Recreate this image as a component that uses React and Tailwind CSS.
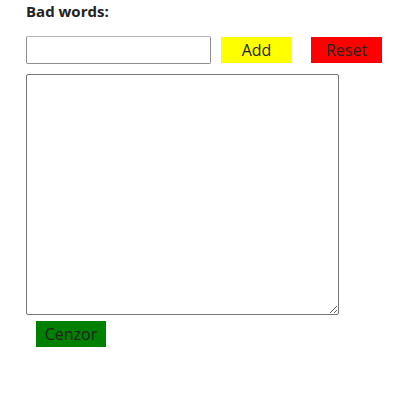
import React, { useState } from "react";

export default function App() {
  const [word, setWord] = useState("");
  const [text, setText] = useState("");

  return (
    <div className="pl-[26px] font-['Open_Sans',sans-serif] text-[#222]">
      <h3 className="text-[15px] font-bold leading-[20px] pt-[1px]">Bad words:</h3>
      <div className="flex items-start mt-[15px]">
        <input
          className="w-[185px] h-[28px] border border-[#8f8f8f] border-t-[#b5b5b5] rounded-[2px] outline-none px-1"
          value={word}
          onChange={(e) => setWord(e.target.value)}
        />
        <button className="ml-[10px] mt-[1px] w-[71px] h-[26px] bg-[#ffff00] text-[16px] leading-none text-[#222]">
          Add
        </button>
        <button className="ml-[19px] mt-[1px] w-[71px] h-[26px] bg-[#ff0000] text-[16px] leading-none text-[#222]">
          Reset
        </button>
      </div>
      <textarea
        className="block mt-[10px] w-[313px] h-[241px] border border-[#767676] rounded-[2px] outline-none p-1"
        value={text}
        onChange={(e) => setText(e.target.value)}
      />
      <button className="ml-[10px] mt-[6px] w-[70px] h-[26px] bg-[#008000] text-[16px] leading-none text-[#222]">
        Cenzor
      </button>
    </div>
  );
}
